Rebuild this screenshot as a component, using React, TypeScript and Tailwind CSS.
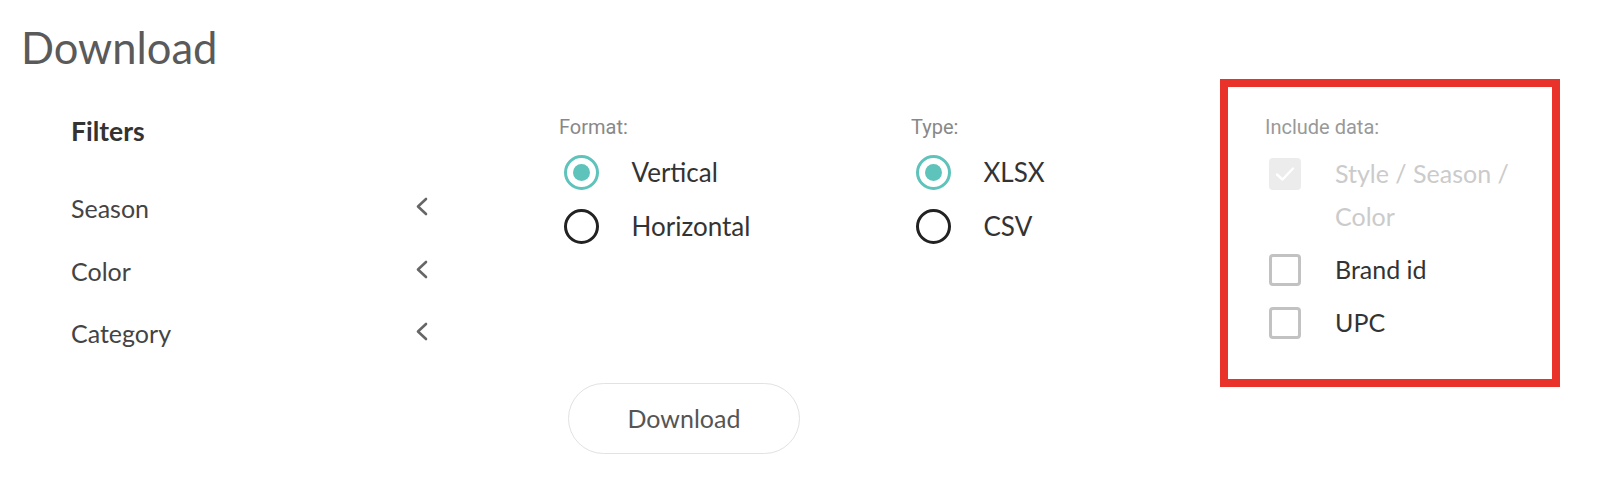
const filters = ['Season', 'Color', 'Category'];

const formats = [
  { label: 'Vertical', checked: true },
  { label: 'Horizontal', checked: false },
];

const types = [
  { label: 'XLSX', checked: true },
  { label: 'CSV', checked: false },
];

function Chevron() {
  return (
    <svg width="13" height="19" viewBox="0 0 13 19" className="-mt-[4px] shrink-0">
      <polyline
        points="11,2 3,9.5 11,17"
        fill="none"
        stroke="#666"
        strokeWidth="2.6"
        strokeLinecap="round"
        strokeLinejoin="round"
      />
    </svg>
  );
}

function Radio({ label, checked }: { label: string; checked: boolean }) {
  return (
    <div className="flex h-[53.5px] items-center gap-[33px] pl-[4.5px]">
      {checked ? (
        <span className="flex h-[35px] w-[35px] items-center justify-center rounded-full border-[3.5px] border-[#5ec3ba]">
          <span className="h-[17px] w-[17px] rounded-full bg-[#5ec3ba]" />
        </span>
      ) : (
        <span className="h-[35px] w-[35px] rounded-full border-[3px] border-[#222]" />
      )}
      <span className="text-[26px] text-[#333]">{label}</span>
    </div>
  );
}

function Checkbox({ label, checked, disabled }: { label: string; checked?: boolean; disabled?: boolean }) {
  return (
    <div className="flex items-start gap-[34px] pl-[4px]">
      {disabled ? (
        <span className="mt-[6px] flex h-[32px] w-[32px] shrink-0 items-center justify-center rounded-[4px] bg-[#ececec]">
          {checked && (
            <svg width="22" height="18" viewBox="0 0 22 18">
              <polyline points="3,9.5 8.5,14.5 19,3.5" fill="none" stroke="#fff" strokeWidth="2.4" strokeLinecap="round" strokeLinejoin="round" />
            </svg>
          )}
        </span>
      ) : (
        <span className="mt-[6px] h-[32px] w-[32px] shrink-0 rounded-[4px] border-[3px] border-[#c2c2c2] bg-white" />
      )}
      <span className={`text-[25px] leading-[43px] ${disabled ? 'text-[#cbcbcb]' : 'text-[#333]'}`}>{label}</span>
    </div>
  );
}

export default function App() {
  return (
    <div className="min-h-screen bg-white px-[19px] pt-[21px] font-[Lato,sans-serif]">
      <h1 className="ml-[2px] text-[43.5px] leading-[1.2] font-normal text-[#5a5a5a]">Download</h1>

      <div className="mt-[5.5px] flex items-start">
        {/* Filters */}
        <div className="ml-[52px] w-[357px] pt-[37px]">
          <h2 className="text-[26.5px] leading-[31px] font-bold text-[#333]">Filters</h2>
          <div className="mt-[31px]">
            {filters.map((f) => (
              <div key={f} className="flex h-[62.5px] items-center justify-between">
                <span className="text-[25px] text-[#444]">{f}</span>
                <Chevron />
              </div>
            ))}
          </div>
        </div>

        {/* Format */}
        <div className="ml-[131px] w-[352px] pt-[37.5px]">
          <div className="font-[Roboto,sans-serif] text-[20px] leading-[23.4px] text-[#888]">Format:</div>
          <div className="mt-[6.3px]">
            {formats.map((r) => (
              <Radio key={r.label} {...r} />
            ))}
          </div>
          <button className="mt-[130px] ml-[9px] flex h-[71px] w-[232px] items-center justify-center rounded-full border-[1.5px] border-[#e2e2e2] bg-white text-[25px] text-[#555]">
            Download
          </button>
        </div>

        {/* Type */}
        <div className="w-[309px] pt-[37.5px]">
          <div className="font-[Roboto,sans-serif] text-[20px] leading-[23.4px] text-[#888]">Type:</div>
          <div className="mt-[6.3px]">
            {types.map((r) => (
              <Radio key={r.label} {...r} />
            ))}
          </div>
        </div>

        {/* Include data */}
        <div className="w-[340px] border-[8px] border-[#e8322a] pt-[29px] pr-[30px] pb-[35px] pl-[37px]">
          <div className="font-[Roboto,sans-serif] text-[20px] leading-[23.4px] text-[#999]">Include data:</div>
          <div className="mt-[13px] flex flex-col gap-[10px]">
            <Checkbox label="Style / Season / Color" checked disabled />
            <Checkbox label="Brand id" />
            <Checkbox label="UPC" />
          </div>
        </div>
      </div>
    </div>
  );
}
